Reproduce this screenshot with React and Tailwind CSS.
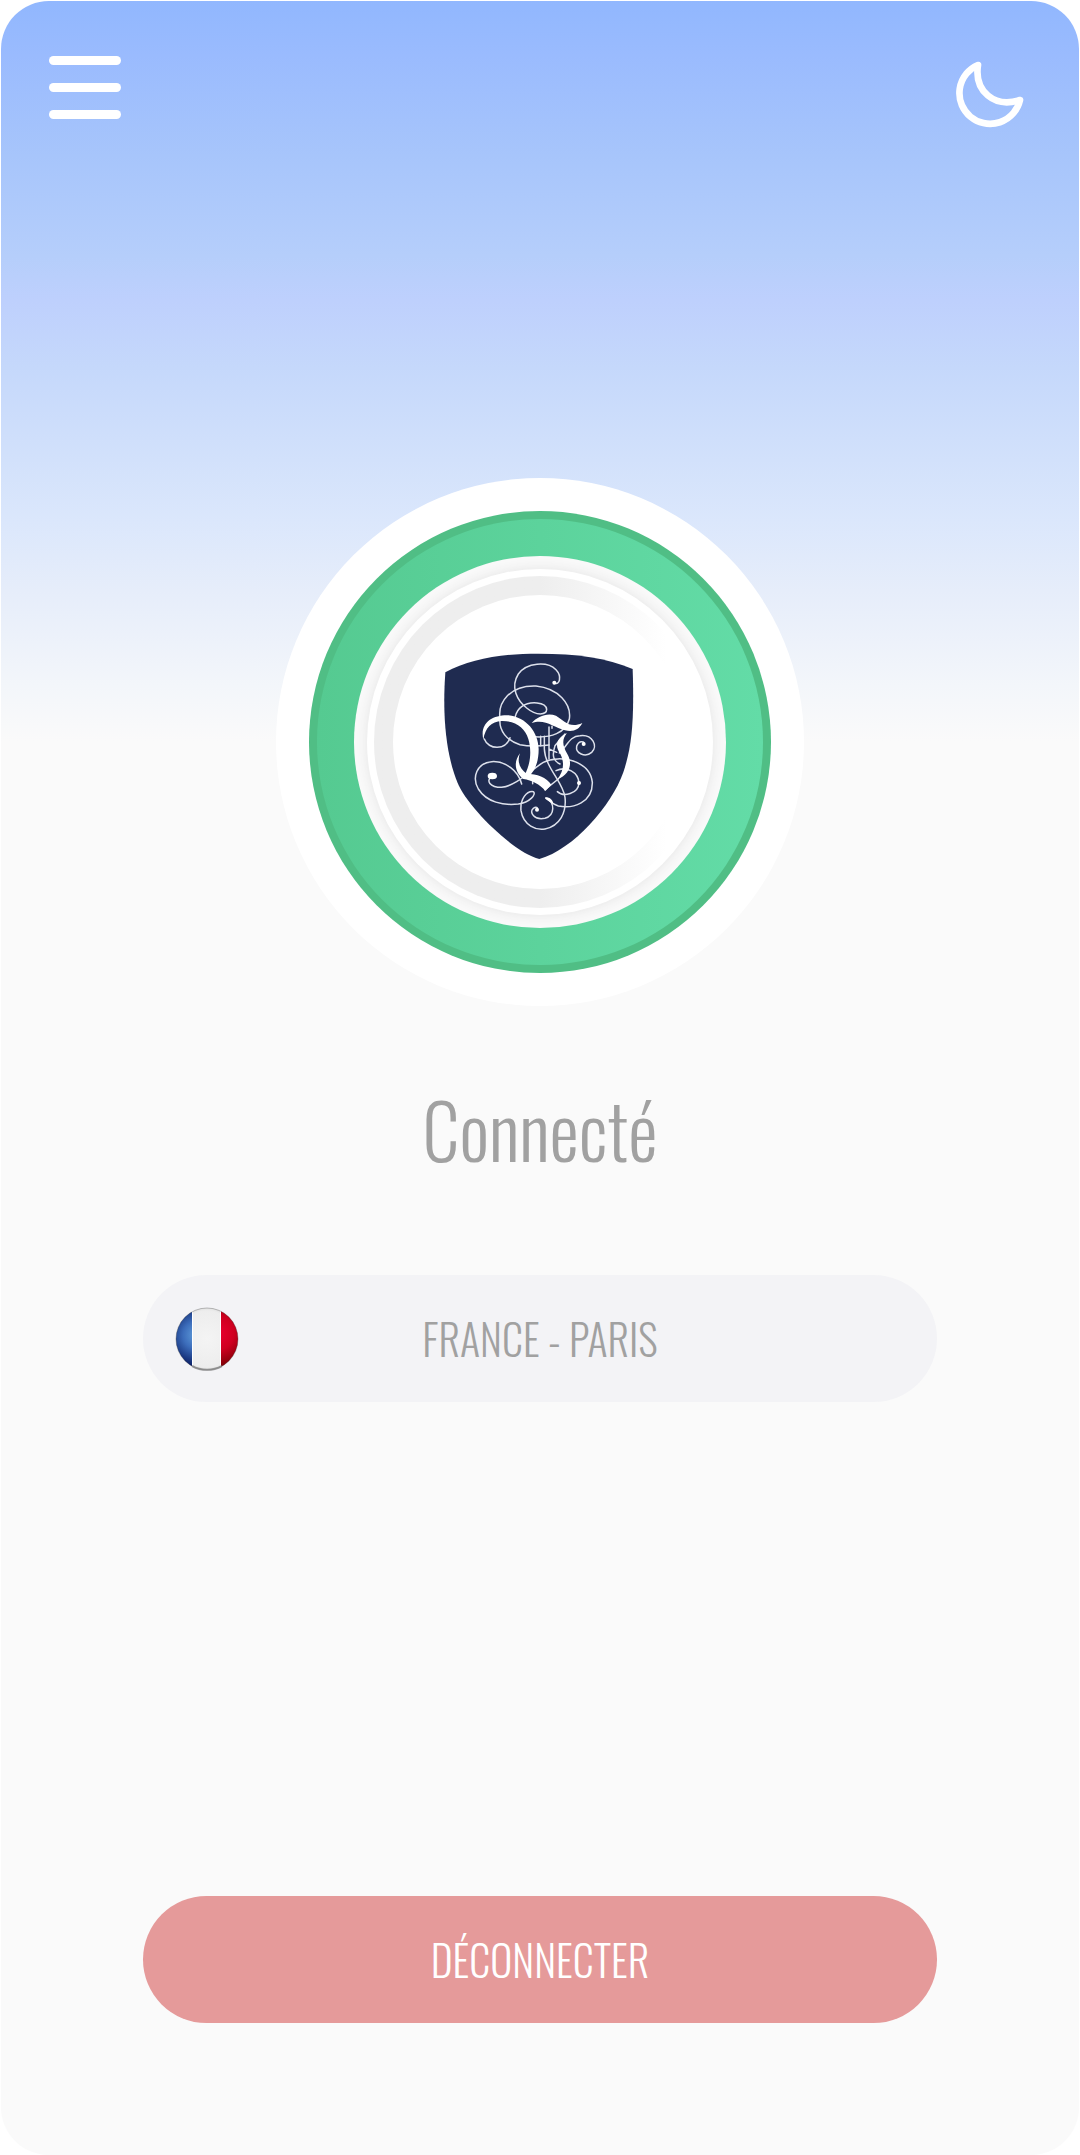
import React, { useState } from 'react';

const MenuIcon = () => (
  <svg className="h-[63px] w-[72px]" viewBox="0 0 72 63" fill="#fff" aria-hidden="true">
    <rect width="72" height="9" rx="4.5" />
    <rect y="27" width="72" height="9" rx="4.5" />
    <rect y="54" width="72" height="9" rx="4.5" />
  </svg>
);

const MoonIcon = () => (
  <svg className="size-21" viewBox="142 135 252 252" fill="none" aria-hidden="true">
    <path
      d="M235 195A92 92 0 1 0 361 300C284 325 223 274 235 195Z"
      stroke="#fff"
      strokeWidth="20"
      strokeLinejoin="round"
    />
  </svg>
);

const FrenchFlag = () => (
  <svg className="size-16 shrink-0" viewBox="0 0 64 64" aria-hidden="true">
    <defs>
      <clipPath id="flag-clip">
        <circle cx="32" cy="32" r="31" />
      </clipPath>
      <radialGradient id="flag-blue" gradientUnits="userSpaceOnUse" cx="22" cy="28" r="31">
        <stop offset="0" stopColor="#62a0dc" />
        <stop offset="0.45" stopColor="#3c6dbb" />
        <stop offset="1" stopColor="#0a1f66" />
      </radialGradient>
      <radialGradient id="flag-white" cx="0.5" cy="0.5" r="0.55">
        <stop offset="0" stopColor="#f4f4f4" />
        <stop offset="0.8" stopColor="#ededed" />
        <stop offset="1" stopColor="#cfcfcf" />
      </radialGradient>
      <radialGradient id="flag-red" gradientUnits="userSpaceOnUse" cx="42" cy="26" r="34">
        <stop offset="0" stopColor="#ec0030" />
        <stop offset="0.5" stopColor="#cf0020" />
        <stop offset="1" stopColor="#7c0005" />
      </radialGradient>
    </defs>
    <g clipPath="url(#flag-clip)">
      <rect width="64" height="64" fill="url(#flag-white)" />
      <rect width="17" height="64" fill="url(#flag-blue)" />
      <rect x="46" width="18" height="64" fill="url(#flag-red)" />
      <path d="M17.5 0V64M45.5 0V64" stroke="#fff" />
    </g>
    <circle cx="32" cy="32" r="31" fill="none" stroke="#333" strokeOpacity="0.3" />
    <path d="M17 59A31 31 0 0 0 47 59" fill="none" stroke="#777" strokeOpacity="0.7" strokeWidth="2" />
  </svg>
);

const Emblem = () => (
  <svg className="h-[230px] w-[220px]" viewBox="0 0 660 690" fill="none" role="img" aria-label="Blason">
    <path
      d="M46 100C120 60 215 44 325 44C440 44 530 56 608 90C613 245 606 320 580 400C545 500 430 632 328 660C250 640 112 505 82 430C50 350 36 240 46 100Z"
      fill="#1f2b50"
    />
    {/* Fine scrollwork */}
    <g stroke="#dde1ec" strokeWidth="4.5" strokeLinecap="round">
      <path d="M373 131C388 142 397 112 378 92C352 66 290 70 265 105C240 145 262 185 290 207C320 232 350 228 350 211C348 189 300 185 275 203C262 212 258 225 256 232" />
      <path d="M210 238C203 190 240 138 318 141C385 148 425 195 418 240C408 280 365 300 300 292" />
      <path d="M210 238C206 275 230 305 270 317C300 323 340 320 357 318" />
      <path d="M163 300C175 333 228 335 240 296" />
      <path d="M388 342C410 325 418 290 450 290C488 285 505 322 485 340C465 357 436 342 440 322C445 305 462 305 463 314" />
      <path d="M187 411C165 425 180 445 215 445C260 440 300 395 340 370C390 345 480 365 487 430C488 490 430 510 385 501C365 495 360 485 348 478" />
      <path d="M275 435C265 395 225 365 185 368C140 372 125 415 145 450C170 490 220 500 265 495C300 490 320 465 310 458C290 455 270 480 273 515C280 560 320 575 345 570C390 560 410 520 405 475C400 430 345 385 343 330V292" />
      <path d="M348 478C376 490 375 530 345 538C315 545 295 520 310 508C318 502 325 505 321 512" />
      <path d="M378 395C410 380 445 400 447 432C445 465 400 475 382 458" />
      <path d="M357 264V360M332 292V320M366 262V268M357 330L380 340M405 285L375 320C365 350 370 365 390 375M308 412V434M345 452L385 420" />
    </g>
    {/* Broad pen strokes */}
    <g fill="#fff">
      <path d="M160 302C148 250 190 227 235 229C290 235 325 280 326 330C326 370 314 398 296 412L284 408C304 370 304 330 295 300C285 265 255 245 215 246C184 248 166 265 160 302Z" />
      <path d="M270 343C260 368 270 390 290 404C320 404 350 415 364 437L346 456C330 436 305 424 280 420C260 405 246 375 270 343Z" />
      <path d="M305 252C322 232 352 220 378 230C402 244 418 270 457 252C446 273 430 279 405 274C370 265 345 238 305 252Z" />
      <path d="M411 282C376 300 375 322 391 345C404 370 402 398 380 423C424 405 427 370 412 345C396 318 396 300 411 282Z" />
      <path d="M345 475C358 474 370 482 370 497C362 487 352 487 345 475Z" />
      <ellipse cx="187" cy="411" rx="14" ry="10" />
      <circle cx="373" cy="131" r="6" />
      <circle cx="461" cy="315" r="6" />
      <circle cx="447" cy="432" r="6" />
      <circle cx="321" cy="512" r="6" />
    </g>
  </svg>
);

const PowerDial = () => (
  <button
    type="button"
    aria-label="Connexion"
    className="flex size-[528px] shrink-0 items-center justify-center rounded-full bg-white"
  >
    <span className="flex size-[462px] items-center justify-center rounded-full bg-[#50be85] p-2">
      <span className="flex size-full items-center justify-center rounded-full bg-linear-to-r from-[#55ca91] to-[#63dca7]">
        <span className="flex size-[372px] items-center justify-center rounded-full bg-[#f9f9f9]">
          <span className="flex size-[346px] items-center justify-center rounded-full bg-white shadow-[0_0_12px_#e4e4e4]">
            <span className="flex size-[332px] items-center justify-center rounded-full bg-linear-to-r from-[#eeeeee] from-50% to-white to-88%">
              <span className="flex size-[294px] items-center justify-center rounded-full bg-white pt-6">
                <Emblem />
              </span>
            </span>
          </span>
        </span>
      </span>
    </span>
  </button>
);

function App() {
  const [city] = useState('FRANCE - PARIS');

  return (
    <div className="flex min-h-screen flex-col bg-white px-px pt-px font-['Oswald','Roboto_Condensed','Liberation_Sans_Narrow',sans-serif] font-light">
      <div className="flex flex-1 flex-col rounded-[48px] bg-[#fafafa] bg-[linear-gradient(#91b7fe_0px,#9abbfe_55px,#a7c5fb_155px,#b5cefb_255px,#bed0fd_300px,#c5d8fb_367px,#d2e1fb_459px,#dbe7fc_520px,#e6edfa_590px,#f3f6fa_685px,#fafafa_740px)]">
        <header className="flex items-center justify-between px-12 pt-11">
          <button type="button" aria-label="Menu">
            <MenuIcon />
          </button>
          <button type="button" aria-label="Mode sombre">
            <MoonIcon />
          </button>
        </header>

        <main className="flex flex-1 flex-col items-center px-[13%] pt-[349px] pb-[132px]">
          <PowerDial />

          <h1 className="mt-19 text-[74px] leading-[94px] text-[#a1a1a1]">Connecté</h1>

          <button
            type="button"
            className="mt-[99px] flex h-[127px] w-full max-w-[794px] items-center rounded-full bg-[#f3f3f6] px-8 text-[42px] text-[#a1a1a1]"
          >
            <FrenchFlag />
            <span className="flex-1 pr-16 text-center">{city}</span>
          </button>

          <button
            type="button"
            className="mt-auto h-[127px] w-full max-w-[794px] rounded-full bg-[#e59a9a] text-[42px] text-white"
          >
            DÉCONNECTER
          </button>
        </main>
      </div>
    </div>
  );
}

export default App;
